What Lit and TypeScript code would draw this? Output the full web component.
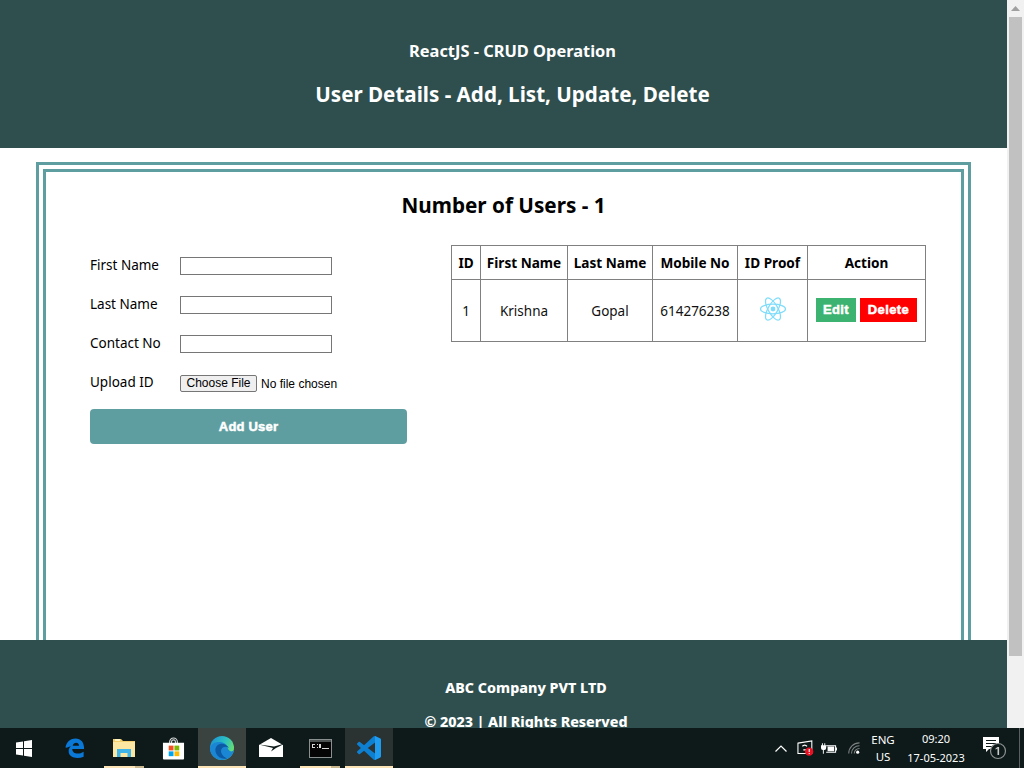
import { LitElement, css, html } from "lit";
import { customElement } from "lit/decorators.js";

@customElement("win-taskbar")
export class WinTaskbar extends LitElement {
  static styles = css`
    :host {
      display: flex;
      height: 40px;
      background: #0e1a1a;
      color: #fff;
      font-family: "Noto Sans", sans-serif;
      font-size: 11.5px;
    }
    .slot {
      position: relative;
      width: 48px;
      height: 40px;
      box-sizing: border-box;
      display: flex;
      align-items: center;
      justify-content: center;
      flex: none;
      margin-right: 1px;
    }
    .start {
      margin-right: 3px;
    }
    .running::after {
      content: "";
      position: absolute;
      left: 0;
      right: 0;
      bottom: 0;
      height: 2px;
      background: #fbe3b5;
    }
    .stacked::after {
      left: 4px;
      right: 4px;
      background: linear-gradient(90deg, #fbe3b5 78%, #c9b88f 78%);
    }
    .active {
      background: #3b4341;
    }
    .open {
      background: #2b3332;
    }
    .spacer {
      flex: 1;
    }
    .tray {
      display: flex;
      align-items: center;
    }
    .tray svg {
      display: block;
      flex: none;
    }
    .chevron {
      margin-right: 10px;
    }
    .monitor {
      margin-right: 6px;
    }
    .battery {
      margin-right: 11px;
    }
    .lang {
      width: 24px;
      margin-left: 11px;
      text-align: center;
      line-height: 17px;
      white-space: nowrap;
    }
    .clock {
      width: 84px;
      margin-right: 4px;
      margin-left: -1px;
      text-align: center;
      line-height: 19px;
      font-size: 11px;
    }
    .notify {
      width: 37px;
    }
    .edge-line {
      width: 1px;
      height: 40px;
      background: #59605f;
    }
    .tail {
      width: 4px;
    }
  `;

  render() {
    return html`
      <div class="slot start">
        <svg width="16" height="17" viewBox="0 0 16 17">
          <path fill="#fff" d="M0 2.500l7-1v6.500H0zM8 1.300L16 0v8H8zM0 9h7v6.500l-7-1zM8 9h8v8l-8-1.300z" />
        </svg>
      </div>
      <div class="slot">
        <svg width="20" height="23" viewBox="0 0 22 24">
          <path
            fill="#0a78d7"
            fill-rule="evenodd"
            d="M.5 11C1.500 4.500 6.500 1 11.500 1c6 0 9.800 4.500 9.500 11.500H8c0 5.500 7 6.500 12.500 3v5.500C13 24 4 22 4 15c0-2.500 1-4.500 3-6-2.500 1-4.800 2.500-6.500 2zM8.500 9h7c0-4-6-4.500-7 0z"
          />
        </svg>
      </div>
      <div class="slot running stacked">
        <svg width="22" height="20" viewBox="0 0 22 20">
          <path fill="#f2cf6b" d="M0 1h8l2 2h12v16H0z" />
          <path fill="#fbe6a2" d="M0 4h22v15H0z" />
          <path fill="#fff3c4" d="M2 1h5v2H2z" />
          <path fill="#3fb4e8" d="M4 19v-8h14v8h-3.500v-4h-7v4z" />
        </svg>
      </div>
      <div class="slot">
        <svg width="23" height="23" viewBox="0 0 24 24">
          <path fill="none" stroke="#d9d9d9" stroke-width="1.200" d="M8 7V5a4 4 0 0 1 8 0v2M10 7V5a2 2 0 0 1 4 0v2" />
          <path fill="#fff" d="M1 6h22v16.500a1 1 0 0 1-1 1H2a1 1 0 0 1-1-1z" />
          <path fill="#f25022" d="M7 9h5v5H7z" />
          <path fill="#7fba00" d="M13 9h5v5h-5z" />
          <path fill="#00a4ef" d="M7 15h5v5H7z" />
          <path fill="#ffb900" d="M13 15h5v5h-5z" />
        </svg>
      </div>
      <div class="slot running active">
        <svg width="24" height="24" viewBox="0 0 24 24">
          <defs>
            <linearGradient id="edgeTop" x1="0" y1="0.100" x2="1" y2="0.600">
              <stop offset="0" stop-color="#1a8fd8" />
              <stop offset="0.550" stop-color="#2cc0c0" />
              <stop offset="1" stop-color="#6ee06a" />
            </linearGradient>
          </defs>
          <circle cx="12" cy="12" r="12" fill="url(#edgeTop)" />
          <path fill="#1a86d4" d="M0 12c1-4 5-6 9-6 5 0 8 2 9 7 2 3 4 3 6 1-.8 6-6 10-12 10C5.500 24 0 18.500 0 12z" />
          <path
            fill="#0c59a4"
            d="M10 8C6 9 4.500 13 6 17c1.500 4 6 6.500 11 5.500-5-2.500-7-6.500-5.500-9.500 1.500-2.500 4.500-3 7.500-1-2-3-5.500-5-9-4z"
          />
        </svg>
      </div>
      <div class="slot">
        <svg width="24" height="20" viewBox="0 0 24 20">
          <path fill="#fff" d="M0 7L12 0l12 7v12H0z" />
          <path fill="#0e1a1a" d="M0 6.500l14 3.500-2 3.500 5-3.500 7-3.500v-.5L15 8.500z" />
        </svg>
      </div>
      <div class="slot running stacked">
        <svg width="23" height="19" viewBox="0 0 23 19">
          <rect width="23" height="19" fill="#8a8f8f" />
          <rect x="1" y="3" width="21" height="15" fill="#050505" />
          <rect x="1" y="1" width="21" height="2" fill="#4d5252" />
          <path fill="#d8d8d8" d="M3 5h3v1H3zM3 8h3v1H3zM3 6h1v2H3zM8 5h1v1H8zM8 8h1v1H8zM10 5h2v4h-2zM13 9h7v1h-7z" />
        </svg>
      </div>
      <div class="slot running open">
        <svg width="24" height="24" viewBox="0 0 24 24">
          <path
            fill="#0e80d2"
            d="M23.150 2.587L18.210.21a1.494 1.494 0 0 0-1.705.29l-9.460 8.630-4.120-3.128a.999.999 0 0 0-1.276.057L.327 7.261A1 1 0 0 0 .326 8.740L3.899 12 .326 15.260a1 1 0 0 0 .001 1.479L1.650 17.940a.999.999 0 0 0 1.276.057l4.120-3.128 9.460 8.630a1.492 1.492 0 0 0 1.704.29l4.942-2.377A1.500 1.500 0 0 0 24 20.060V3.939a1.500 1.500 0 0 0-.850-1.352zm-5.146 14.861L10.826 12l7.178-5.448v10.896z"
          />
          <path fill="#1f9cf0" d="M18 .1l5.150 2.487A1.500 1.500 0 0 1 24 3.939V20.060a1.500 1.500 0 0 1-.85 1.352L18 23.900z" />
        </svg>
      </div>
      <div class="spacer"></div>
      <div class="tray">
        <svg class="chevron" width="12" height="7" viewBox="0 0 12 7">
          <path fill="none" stroke="#fff" stroke-width="1.200" d="M.5 6.500l5.500-5.500 5.500 5.500" />
        </svg>
        <svg class="monitor" width="18" height="17" viewBox="0 0 20 19">
          <path fill="none" stroke="#fff" stroke-width="1.200" d="M1 3.500L16.500 1v14H1z" />
          <path fill="none" stroke="#fff" stroke-width="1.500" d="M6 7a3 3 0 0 1 5 0M10 11H7" />
          <circle cx="13.500" cy="13" r="4.700" fill="#e81123" />
          <path fill="#fff" d="M13 10h1.200v3.500H13zM13 14.500h1.200v1.200H13z" />
        </svg>
        <svg class="battery" width="16" height="11" viewBox="0 0 17 11">
          <path fill="none" stroke="#fff" stroke-width="1.100" d="M5.500 2.500h10v7h-10" />
          <path fill="#fff" d="M7 3.500h7v5H7zM16 4.500h1v3h-1zM1 0h1v2H1zM3.500 0h1v2h-1zM0 2h5.500v3a2 2 0 0 1-2 2H3v4H2V7A2 2 0 0 1 0 5z" />
        </svg>
        <svg width="12" height="12" viewBox="0 0 13 13">
          <g fill="none" stroke="#7c8180" stroke-width="1.200">
            <path d="M.8 12.500A11.500 11.500 0 0 1 12.500 1" />
            <path d="M3.800 12.500A8.500 8.500 0 0 1 12.500 4" />
            <path d="M6.800 12.500A5.500 5.500 0 0 1 12.500 7" />
          </g>
          <circle cx="10.500" cy="11" r="1.700" fill="#fff" />
        </svg>
        <div class="lang">ENG<br />US</div>
        <div class="clock">09:20<br />17-05-2023</div>
        <div class="notify">
          <svg width="26" height="24" viewBox="0 0 26 24">
            <path fill="#fff" d="M1 1h16v12H7l-3 3v-3H1z" />
            <path fill="#0e1a1a" d="M4 4h10v1H4zM4 7h10v1H4zM4 10h6v1H4z" />
            <circle cx="16" cy="15" r="7.500" fill="#0e1a1a" stroke="#8d9190" stroke-width="1.200" />
            <path fill="#c9cbcb" d="M15.500 11h1.600v8h-1.600zM13.500 12.500l2-1.500v1.600l-2 1z" />
          </svg>
        </div>
        <div class="edge-line"></div>
        <div class="tail"></div>
      </div>
    `;
  }
}

@customElement("app-root")
export class AppRoot extends LitElement {
  static styles = css`
    :host {
      display: block;
      width: 1024px;
      height: 768px;
      overflow: hidden;
      font-family: "Noto Sans", "Open Sans", sans-serif;
      color: #000;
      background: #fff;
    }
    .window {
      display: flex;
      height: 728px;
    }
    .page {
      width: 1007px;
      display: flex;
      flex-direction: column;
      overflow: hidden;
    }
    .scrollbar {
      flex: 1;
      background: #f1f1f1;
      display: flex;
      flex-direction: column;
      align-items: center;
    }
    .arrow {
      height: 17px;
      display: flex;
      align-items: center;
      justify-content: center;
    }
    .thumb {
      width: 13px;
      height: 639px;
      background: #c1c1c1;
    }
    header {
      flex: none;
      height: 148px;
      box-sizing: border-box;
      padding: 40px 0 0 18px;
      background: #2f4f4f;
      color: #fff;
      text-align: center;
    }
    .app-title {
      margin: 0;
      font-size: 16.4px;
      line-height: 22px;
      font-weight: 700;
    }
    .app-sub {
      margin: 17px 0 0;
      font-size: 20.6px;
      line-height: 30px;
      font-weight: 700;
    }
    .content {
      flex: 1;
      min-height: 0;
      overflow: hidden;
      padding: 14px 36px 0;
    }
    .frame {
      height: 540px;
      border: 3px solid #5f9ea0;
      padding: 4px;
    }
    .frame-inner {
      height: 100%;
      box-sizing: border-box;
      border: 3px solid #5f9ea0;
      padding: 18px 35px 0;
    }
    .count {
      margin: 0;
      text-align: center;
      font-size: 20.7px;
      line-height: 30px;
      font-weight: 700;
    }
    .columns {
      display: flex;
      gap: 44px;
      margin: 25px 0 0 9px;
      align-items: flex-start;
    }
    form {
      flex: none;
      width: 317px;
      padding-top: 11px;
      font-size: 13.5px;
    }
    .field {
      display: grid;
      grid-template-columns: 90px 1fr;
      align-items: center;
      height: 18px;
      margin-bottom: 21px;
    }
    .field label {
      padding-bottom: 2px;
    }
    .field input[type="text"] {
      box-sizing: border-box;
      width: 152px;
      height: 18px;
      padding: 0 2px;
      border: 1px solid #767676;
      background: #fff;
      outline: none;
    }
    .field input[type="file"] {
      font-family: "Liberation Sans", Arial, sans-serif;
      font-size: 12px;
    }
    .field input[type="file"]::file-selector-button {
      height: 17px;
      padding: 0 5.500px;
      margin-right: 4px;
      border: 1px solid #767676;
      border-radius: 2px;
      background: #efefef;
      font: inherit;
    }
    .add {
      display: block;
      width: 317px;
      height: 35px;
      margin-top: -3px;
      border: none;
      border-radius: 4px;
      background: #5f9ea0;
      color: #fff;
      font-family: "Liberation Sans", Arial, sans-serif;
      font-size: 13px;
      font-weight: 700;
      letter-spacing: 0.2px;
      -webkit-text-stroke: 0.5px #fff;
    }
    table {
      width: 474px;
      border-collapse: collapse;
      table-layout: fixed;
      font-size: 13.5px;
    }
    th,
    td {
      border: 1px solid #808080;
      padding: 0;
      text-align: center;
    }
    th {
      height: 33px;
      font-weight: 700;
      font-size: 13.6px;
    }
    td {
      height: 61px;
      color: #111;
    }
    .proof {
      display: block;
      margin: 0 auto;
      position: relative;
      top: -2px;
    }
    .actions {
      display: flex;
      justify-content: center;
      gap: 4px;
      margin-top: -2px;
    }
    .actions button {
      height: 24px;
      border: none;
      color: #fff;
      padding: 0;
      font-family: "Liberation Sans", Arial, sans-serif;
      font-size: 13px;
      font-weight: 700;
      letter-spacing: 0.4px;
      -webkit-text-stroke: 0.5px #fff;
    }
    .edit {
      width: 40px;
      background: #3cb371;
    }
    .delete {
      width: 57px;
      background: #f00;
    }
    footer {
      flex: none;
      height: 88px;
      box-sizing: border-box;
      padding: 38px 0 0 45px;
      background: #2f4f4f;
      color: #fff;
      text-align: center;
      font-size: 14.3px;
      font-weight: 800;
      line-height: 20px;
    }
    footer p {
      margin: 0 0 14px;
    }
  `;

  render() {
    return html`
      <div class="window">
        <div class="page">
          <header>
            <h1 class="app-title">ReactJS - CRUD Operation</h1>
            <h2 class="app-sub">User Details - Add, List, Update, Delete</h2>
          </header>
          <div class="content">
            <div class="frame">
              <div class="frame-inner">
                <h2 class="count">Number of Users - 1</h2>
                <div class="columns">
                  <form>
                    <div class="field"><label>First Name</label><input type="text" /></div>
                    <div class="field"><label>Last Name</label><input type="text" /></div>
                    <div class="field"><label>Contact No</label><input type="text" /></div>
                    <div class="field"><label>Upload ID</label><input type="file" /></div>
                    <button class="add" type="button">Add User</button>
                  </form>
                  <table>
                    <colgroup>
                      <col style="width:29px" />
                      <col style="width:87px" />
                      <col style="width:85px" />
                      <col style="width:85px" />
                      <col style="width:70px" />
                      <col style="width:118px" />
                    </colgroup>
                    <thead>
                      <tr>
                        <th>ID</th>
                        <th>First Name</th>
                        <th>Last Name</th>
                        <th>Mobile No</th>
                        <th>ID Proof</th>
                        <th>Action</th>
                      </tr>
                    </thead>
                    <tbody>
                      <tr>
                        <td>1</td>
                        <td>Krishna</td>
                        <td>Gopal</td>
                        <td>614276238</td>
                        <td>
                          <svg class="proof" width="28" height="26" viewBox="-14 -13 28 26">
                            <g fill="none" stroke="#7fdcfb" stroke-width="1.200">
                              <ellipse rx="12.500" ry="4.800" />
                              <ellipse rx="12.500" ry="4.800" transform="rotate(60)" />
                              <ellipse rx="12.500" ry="4.800" transform="rotate(120)" />
                            </g>
                            <circle r="2.400" fill="#7fdcfb" />
                          </svg>
                        </td>
                        <td>
                          <div class="actions">
                            <button class="edit" type="button">Edit</button>
                            <button class="delete" type="button">Delete</button>
                          </div>
                        </td>
                      </tr>
                    </tbody>
                  </table>
                </div>
              </div>
            </div>
          </div>
          <footer>
            <p>ABC Company PVT LTD</p>
            <p>© 2023 | All Rights Reserved</p>
          </footer>
        </div>
        <div class="scrollbar">
          <div class="arrow">
            <svg width="9" height="5" viewBox="0 0 9 5"><path fill="#a0a0a0" d="M4.500 0L9 5H0z" /></svg>
          </div>
          <div class="thumb"></div>
        </div>
      </div>
      <win-taskbar></win-taskbar>
    `;
  }
}
